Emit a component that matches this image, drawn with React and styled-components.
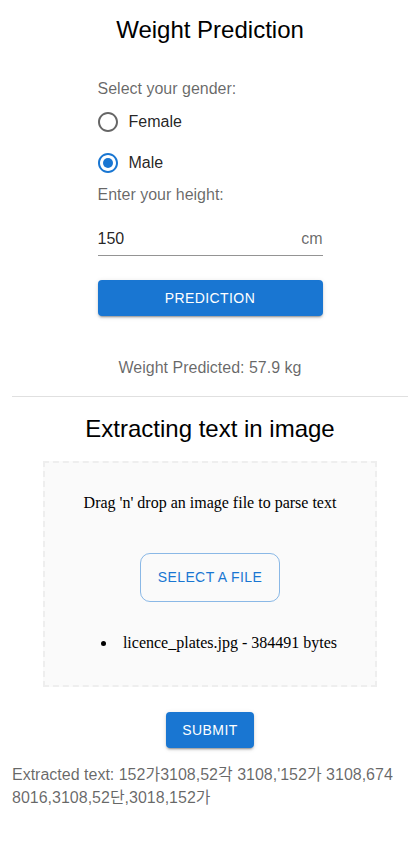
import styled, { createGlobalStyle } from "styled-components"

const GlobalStyle = createGlobalStyle`
body{
  margin:0;
  background:#fff;
  font-family:"Liberation Sans", Arial, sans-serif;
}
`
const Page = styled.div`
width:396px;
padding:0 7px 20px 12px;
`
const Title = styled.h2`
margin:${p => p.$top || 15}px 0 0;
font-size:24px;
font-weight:400;
line-height:29px;
text-align:center;
color:#000;
`
const Form = styled.div`
width:225px;
margin:0 auto;
display:flex;
flex-direction:column;
`
const Label = styled.div`
margin-top:${p => p.$top || 0}px;
font-size:16px;
line-height:24px;
color:rgba(0,0,0,0.6);
`
const RadioRow = styled.label`
display:flex;
align-items:center;
height:41px;
margin-left:-11px;
font-size:16px;
color:rgba(0,0,0,0.87);
cursor:pointer;
`
const RadioBox = styled.span`
display:flex;
padding:9px;
color:${p => (p.$checked ? "#1976d2" : "rgba(0,0,0,0.6)")};
`
const InputRow = styled.div`
margin-top:16px;
display:flex;
align-items:center;
border-bottom:1px solid rgba(0,0,0,0.42);
padding:4px 0 5px;
`
const Input = styled.input`
flex:1;
min-width:0;
border:none;
outline:none;
padding:0;
font:inherit;
font-size:16px;
line-height:23px;
height:23px;
color:rgba(0,0,0,0.87);
background:transparent;
`
const Adorn = styled.span`
font-size:16px;
color:rgba(0,0,0,0.6);
`
const Contained = styled.button`
display:block;
margin:${p => p.$margin || "0"};
width:${p => p.$width || "auto"};
height:36px;
padding:6px 16px;
border:none;
border-radius:4px;
background:#1976d2;
color:#fff;
font-family:"Liberation Sans", Arial, sans-serif;
font-size:14px;
letter-spacing:0.4px;
text-transform:uppercase;
box-shadow:0px 3px 1px -2px rgba(0,0,0,0.2),0px 2px 2px 0px rgba(0,0,0,0.14),0px 1px 5px 0px rgba(0,0,0,0.12);
cursor:pointer;
`
const Result = styled.div`
margin-top:40px;
text-align:center;
font-size:16px;
line-height:24px;
color:rgba(0,0,0,0.6);
`
const Divider = styled.hr`
margin:16px 0 0;
border:none;
border-top:1px solid rgba(0,0,0,0.12);
`
const Dropzone = styled.div`
margin:18px auto 0;
width:334px;
box-sizing:border-box;
padding:31px 20px 33px;
border:2px dashed #eeeeee;
background:#fafafa;
text-align:center;
font-family:"Liberation Serif", "Times New Roman", serif;
font-size:16px;
line-height:18px;
color:#000;
`
const DropText = styled.p`
margin:0;
`
const Outlined = styled.button`
margin:41px auto 0;
display:block;
padding:11px 17px;
border:1px solid rgba(25,118,210,0.5);
border-radius:10px;
background:transparent;
color:#1976d2;
font-family:"Liberation Sans", Arial, sans-serif;
font-size:14px;
line-height:25px;
letter-spacing:0.4px;
cursor:pointer;
`
const Files = styled.ul`
margin:32px 0 0;
padding-left:18px;
list-style-position:inside;
`
const Extracted = styled.div`
margin-top:15px;
padding-right:10px;
font-size:16px;
line-height:23px;
color:rgba(0,0,0,0.6);
word-break:break-all;
font-family:"Liberation Sans", Arial, "Noto Sans CJK KR", sans-serif;
`

const RadioIcon = ({ checked }) => (
  <svg width="24" height="24" viewBox="0 0 24 24" fill="currentColor">
    <path d="M12 2C6.48 2 2 6.48 2 12s4.48 10 10 10 10-4.48 10-10S17.52 2 12 2zm0 18c-4.42 0-8-3.58-8-8s3.58-8 8-8 8 3.58 8 8-3.58 8-8 8z" />
    {checked && <circle cx="12" cy="12" r="5" />}
  </svg>
)

export default function App() {
  return (
    <Page>
      <GlobalStyle />
      <Title>Weight Prediction</Title>
      <Form>
        <Label $top={33}>Select your gender:</Label>
        <RadioRow>
          <RadioBox><RadioIcon /></RadioBox>
          Female
        </RadioRow>
        <RadioRow>
          <RadioBox $checked><RadioIcon checked /></RadioBox>
          Male
        </RadioRow>
        <Label>Enter your height:</Label>
        <InputRow>
          <Input defaultValue="150" />
          <Adorn>cm</Adorn>
        </InputRow>
        <Contained $margin="24px 0 0" $width="100%">Prediction</Contained>
      </Form>
      <Result>Weight Predicted: 57.9 kg</Result>
      <Divider />
      <Title as="h3" $top={17}>Extracting text in image</Title>
      <Dropzone>
        <DropText>Drag 'n' drop an image file to parse text</DropText>
        <Outlined>SELECT A FILE</Outlined>
        <Files>
          <li>licence_plates.jpg - 384491 bytes</li>
        </Files>
      </Dropzone>
      <Contained $margin="25px auto 0">Submit</Contained>
      <Extracted>Extracted text: 152가3108,52각 3108,'152가 3108,6748016,3108,52단,3018,152가</Extracted>
    </Page>
  )
}
